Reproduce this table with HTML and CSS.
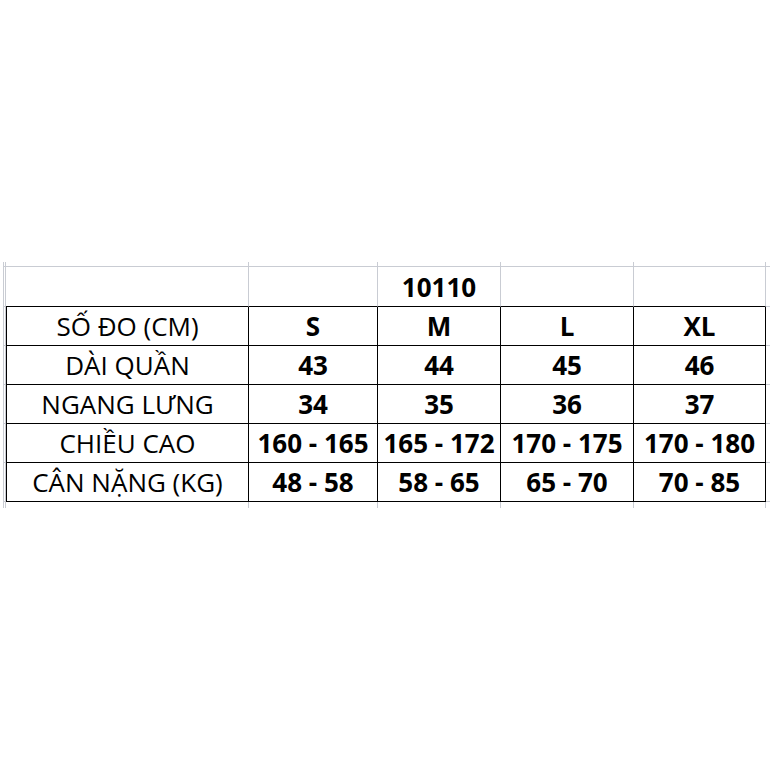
FILE: index.html
```html
<!DOCTYPE html>
<html lang="vi">
<head>
<meta charset="utf-8">
<title>Bảng size 10110</title>
<link rel="stylesheet" href="styles.css">
</head>
<body>
<div class="sheet">
  <div class="row top">
    <div class="cell gut"></div><div class="cell"></div><div class="cell"></div><div class="cell"></div><div class="cell"></div><div class="cell"></div><div class="cell ext"></div>
  </div>
  <div class="row head">
    <div class="cell gut"></div><div class="cell main"></div><div class="cell main"></div><div class="cell main val">10110</div><div class="cell main"></div><div class="cell main"></div><div class="cell ext"></div>
  </div>
  <div class="row data">
    <div class="cell gut"></div><div class="cell main first label">SỐ ĐO (CM)</div><div class="cell main val">S</div><div class="cell main val">M</div><div class="cell main val">L</div><div class="cell main val">XL</div><div class="cell ext"></div>
  </div>
  <div class="row data">
    <div class="cell gut"></div><div class="cell main first label">DÀI QUẦN</div><div class="cell main val">43</div><div class="cell main val">44</div><div class="cell main val">45</div><div class="cell main val">46</div><div class="cell ext"></div>
  </div>
  <div class="row data">
    <div class="cell gut"></div><div class="cell main first label">NGANG LƯNG</div><div class="cell main val">34</div><div class="cell main val">35</div><div class="cell main val">36</div><div class="cell main val">37</div><div class="cell ext"></div>
  </div>
  <div class="row data">
    <div class="cell gut"></div><div class="cell main first label">CHIỀU CAO</div><div class="cell main val">160 - 165</div><div class="cell main val">165 - 172</div><div class="cell main val">170 - 175</div><div class="cell main val">170 - 180</div><div class="cell ext"></div>
  </div>
  <div class="row data">
    <div class="cell gut"></div><div class="cell main first label">CÂN NẶNG (KG)</div><div class="cell main val">48 - 58</div><div class="cell main val">58 - 65</div><div class="cell main val">65 - 70</div><div class="cell main val">70 - 85</div><div class="cell ext"></div>
  </div>
  <div class="row foot">
    <div class="cell gut"></div><div class="cell"></div><div class="cell"></div><div class="cell"></div><div class="cell"></div><div class="cell"></div><div class="cell ext"></div>
  </div>
</div>
</body>
</html>
```
FILE: styles.css
```css
html, body {
  margin: 0;
  padding: 0;
  background: #ffffff;
}

body {
  font-family: "Open Sans", "Noto Sans", sans-serif;
  color: #000;
}

.sheet {
  padding-top: 262px;
  padding-left: 3px;
}

.row {
  display: grid;
  grid-template-columns: 3px 243px 129px 123px 133px 132px 5px;
}

.cell {
  box-sizing: border-box;
  border-right: 1px solid #c9ccd3;
  display: flex;
  align-items: center;
  justify-content: center;
  white-space: nowrap;
  font-size: 26px;
  line-height: 1;
}

.gut {
  border-left: 1px solid #c9ccd3;
}

.ext {
  border-right: none;
}

.top { height: 5px; }
.top .cell { border-bottom: 1px solid #c9ccd3; }

.head { height: 40px; }
.head .cell { border-bottom: 1px solid #c9ccd3; }
.head .main { border-bottom-color: #000; }

.data { height: 39px; }
.data .cell { border-bottom: 1px solid #c9ccd3; }
.data .main { border-right-color: #000; border-bottom-color: #000; }
.data .first { border-left: 1px solid #000; }

.foot { height: 6px; }

.label {
  font-weight: 400;
}

.val {
  font-weight: 700;
}
```
